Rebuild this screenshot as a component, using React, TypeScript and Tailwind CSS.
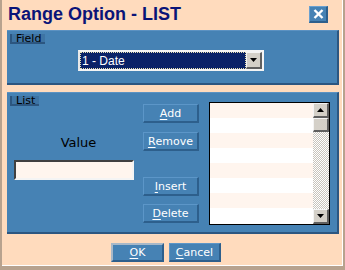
import React from "react";

function Btn({ accel, rest, def }: { accel: string; rest: string; def?: boolean }) {
  return (
    <div
      className={
        "flex h-[19px] items-center justify-center bg-[#4682b4] text-[11px] leading-none text-white " +
        (def
          ? "border-2 border-[#a8b8c8] border-b-[#2d5f8c] border-r-[#2d5f8c]"
          : "border border-[#5c96c8] border-b-2 border-r-2 border-b-[#2d5f8c] border-r-[#2d5f8c]")
      }
      style={{ fontFamily: '"DejaVu Sans", sans-serif' }}
    >
      <span className="underline underline-offset-2">{accel}</span>
      <span>{rest}</span>
    </div>
  );
}

function Tab({ text, w }: { text: string; w: string }) {
  return (
    <div
      className={
        "ml-[3px] mt-[3px] flex h-[10px] items-center border-b-2 border-l-2 border-[#2c5680] bg-[#3e74a4] pl-[4px] text-[11px] leading-none text-black " +
        w
      }
      style={{ fontFamily: '"DejaVu Sans", sans-serif' }}
    >
      {text}
    </div>
  );
}

function ScrollBtn({ down }: { down?: boolean }) {
  return (
    <div className="flex h-[15px] w-[16px] items-center justify-center border border-b-2 border-r-2 border-[#f4f4f4] border-b-[#606060] border-r-[#606060] bg-[#d4d0c8]">
      <svg width="7" height="4" viewBox="0 0 7 4">
        <path d={down ? "M0 0h7L3.5 4z" : "M3.5 0L7 4H0z"} fill="#000" />
      </svg>
    </div>
  );
}

export default function App() {
  const rows = [0, 1, 2, 3, 4, 5, 6, 7];
  return (
    <div className="h-[270px] w-[345px] bg-[#b8a28e] pb-[4px] pl-[2px] pr-[2px]">
      <div
        className="flex h-full flex-col border-b border-r border-white bg-[#ffdbbd]"
        style={{ fontFamily: '"Liberation Sans", Arial, sans-serif' }}
      >
        <div className="flex h-[30px] items-start justify-between pl-[6px] pr-[14px] pt-[4px]">
          <div className="text-[18px] font-bold leading-[21px] text-[#0a1478]">Range Option - LIST</div>
          <div className="mt-[2px] flex h-[17px] w-[19px] items-center justify-center border border-b-2 border-r-2 border-[#6aa0d0] border-b-[#2d5f8c] border-r-[#2d5f8c] bg-[#4682b4]">
            <svg width="11" height="10" viewBox="0 0 11 10">
              <path d="M1.5 1l8 8M9.5 1l-8 8" stroke="#fff" strokeWidth="2.4" />
            </svg>
          </div>
        </div>

        <div className="ml-[5px] mr-[3px] h-[55px] border-b-2 border-r-2 border-t border-[#2c5680] border-t-[#5c92c2] bg-[#4682b4]">
          <Tab text="Field" w="w-[35px]" />
          <div className="ml-[71px] mt-[6px] flex h-[21px] w-[186px] border-2 border-[#f4f4f4] border-l-[#e8e8e8]">
            <div className="flex flex-1 items-center border border-dotted border-[#e8e0b0] bg-[#0a2268] pl-[1px] text-[12px] text-white">
              1 - Date
            </div>
            <div className="flex w-[16px] items-center justify-center border border-b-2 border-r-2 border-[#f4f4f4] border-b-[#606060] border-r-[#606060] bg-[#d4d0c8]">
              <svg width="7" height="4" viewBox="0 0 7 4">
                <path d="M0 0h7L3.5 4z" fill="#000" />
              </svg>
            </div>
          </div>
        </div>

        <div className="ml-[5px] mr-[3px] mt-[7px] h-[142px] border-b-2 border-r-2 border-t border-[#2c5680] border-t-[#5c92c2] bg-[#4682b4]">
          <Tab text="List" w="w-[29px]" />
          <div className="flex">
            <div className="flex w-[136px] flex-col pl-[7px] pt-[29px]">
              <div
                className="text-center text-[13px] leading-[16px] text-black"
                style={{ fontFamily: '"DejaVu Sans", sans-serif' }}
              >
                Value
              </div>
              <div className="mt-[9px] h-[20px] w-[120px] border-2 border-[#404040] border-b-[#f4f4f4] border-r-[#f4f4f4] bg-[#fff5ee]" />
            </div>
            <div className="-mt-[2px] flex w-[56px] flex-col">
              <Btn accel="A" rest="dd" />
              <div className="mt-[9px]">
                <Btn accel="R" rest="emove" />
              </div>
              <div className="mt-[26px]">
                <Btn accel="I" rest="nsert" />
              </div>
              <div className="mt-[8px]">
                <Btn accel="D" rest="elete" />
              </div>
            </div>
            <div className="-mt-[4px] ml-[10px] flex h-[123px] w-[121px] border border-black bg-white">
              <div className="flex flex-1 flex-col">
                {rows.map((r) => (
                  <div key={r} className={"h-[15px] shrink-0 " + (r % 2 === 0 ? "bg-[#fff5ee]" : "bg-white")} />
                ))}
              </div>
              <div className="flex w-[16px] flex-col bg-[repeating-conic-gradient(#c8c4bc_0_25%,#ffffff_0_50%)] bg-[length:2px_2px]">
                <ScrollBtn />
                <div className="h-[14px] border border-b-2 border-r-2 border-[#f4f4f4] border-b-[#606060] border-r-[#606060] bg-[#d4d0c8]" />
                <div className="flex-1" />
                <ScrollBtn down />
              </div>
            </div>
          </div>
        </div>

        <div className="mt-[9px] flex gap-[5px] pl-[109px]">
          <div className="w-[53px]">
            <Btn accel="O" rest="K" def />
          </div>
          <div className="w-[52px]">
            <Btn accel="C" rest="ancel" />
          </div>
        </div>
      </div>
    </div>
  );
}
